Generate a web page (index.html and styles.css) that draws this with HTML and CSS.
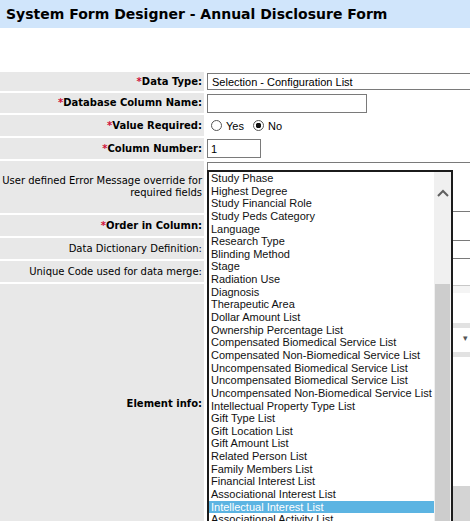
FILE: index.html
```html
<!DOCTYPE html>
<html lang="en">
<head>
    <meta charset="UTF-8">
    <meta name="viewport" content="width=device-width, initial-scale=1.0">
    <title>System Form Designer</title>
    <link rel="stylesheet" href="styles.css">
</head>
<body>
    <div class="page-title">System Form Designer - Annual Disclosure Form</div>

    <div class="form-grid">
        <div class="label strong"><span class="req">*</span>Data Type:</div>
        <div class="value">
            <select class="field select-wide">
                <option>Selection - Configuration List</option>
            </select>
        </div>

        <div class="label strong"><span class="req">*</span>Database Column Name:</div>
        <div class="value"><input type="text" class="field input-name"></div>

        <div class="label strong"><span class="req">*</span>Value Required:</div>
        <div class="value radios">
            <label class="radio"><input type="radio" name="required"> Yes</label>
            <label class="radio"><input type="radio" name="required" checked> No</label>
        </div>

        <div class="label strong"><span class="req">*</span>Column Number:</div>
        <div class="value"><input type="text" class="field input-number" value="1"></div>

        <div class="label nowrap">User defined Error Message override for<br>required fields</div>
        <div class="value top"><textarea class="field error-text"></textarea></div>

        <div class="label strong"><span class="req">*</span>Order in Column:</div>
        <div class="value"></div>

        <div class="label">Data Dictionary Definition:</div>
        <div class="value top"><input type="text" class="field input-wide"></div>

        <div class="label">Unique Code used for data merge:</div>
        <div class="value"></div>

        <div class="label strong">Element info:</div>
        <div class="value top">
            <div class="editor">
                <div class="editor-top"></div>
                <div class="editor-bar"></div>
                <div class="editor-sep"></div>
                <div class="editor-bar small"><span class="caret">&#9662;</span></div>
                <div class="editor-sep"></div>
                <div class="editor-body"></div>
                <div class="editor-foot"></div>
            </div>
        </div>

        <!-- открытый список типов конфигурации -->
        <div class="listbox">
            <div class="options">
                <div class="opt">Study Phase</div>
                <div class="opt">Highest Degree</div>
                <div class="opt">Study Financial Role</div>
                <div class="opt">Study Peds Category</div>
                <div class="opt">Language</div>
                <div class="opt">Research Type</div>
                <div class="opt">Blinding Method</div>
                <div class="opt">Stage</div>
                <div class="opt">Radiation Use</div>
                <div class="opt">Diagnosis</div>
                <div class="opt">Therapeutic Area</div>
                <div class="opt">Dollar Amount List</div>
                <div class="opt">Ownership Percentage List</div>
                <div class="opt">Compensated Biomedical Service List</div>
                <div class="opt">Compensated Non-Biomedical Service List</div>
                <div class="opt">Uncompensated Biomedical Service List</div>
                <div class="opt">Uncompensated Biomedical Service List</div>
                <div class="opt">Uncompensated Non-Biomedical Service List</div>
                <div class="opt">Intellectual Property Type List</div>
                <div class="opt">Gift Type List</div>
                <div class="opt">Gift Location List</div>
                <div class="opt">Gift Amount List</div>
                <div class="opt">Related Person List</div>
                <div class="opt">Family Members List</div>
                <div class="opt">Financial Interest List</div>
                <div class="opt">Associational Interest List</div>
                <div class="opt selected">Intellectual Interest List</div>
                <div class="opt">Associational Activity List</div>
            </div>
            <div class="scrollbar">
                <svg class="arrow-up" width="12" height="8" viewBox="0 0 12 8">
                    <polyline points="1,7 6,2 11,7" fill="none" stroke="#606060" stroke-width="2"/>
                </svg>
                <div class="thumb"></div>
            </div>
        </div>
    </div>
</body>
</html>
```

FILE: styles.css
```css
html, body {
    overflow: hidden;
}
body {
    margin: 0;
    font-family: "DejaVu Sans", Verdana, sans-serif;
    font-size: 10px;
    color: #000;
    background: #fff;
}
.page-title {
    height: 28px;
    line-height: 28px;
    padding-left: 6px;
    background: #d0e5fb;
    font-size: 14px;
    font-weight: bold;
    white-space: nowrap;
}
.form-grid {
    position: relative;
    display: grid;
    grid-template-columns: 204px 1fr;
    grid-template-rows: 19px 20px 21px 21px 52px 21px 21px 21px 240px;
    gap: 2px;
    margin-top: 44px;
}
.label {
    display: flex;
    align-items: center;
    justify-content: flex-end;
    padding: 0 2px 0 0;
    background: #e8e8e8;
    text-align: right;
    line-height: 12px;
}
.label.nowrap {
    white-space: nowrap;
}
.label.strong {
    font-weight: bold;
}
.req {
    color: #d0103a;
}
.value {
    display: flex;
    align-items: center;
    padding-left: 1px;
    min-width: 0;
    font-family: "Liberation Sans", Arial, sans-serif;
    font-size: 11px;
}
.value.top {
    align-items: flex-start;
}
.field {
    box-sizing: border-box;
    margin: 0;
    border: 1px solid #7a7a7a;
    border-radius: 0;
    background: #fff;
    font-family: "Liberation Sans", Arial, sans-serif;
    font-size: 11px;
    color: #000;
    flex-shrink: 0;
}
.select-wide {
    width: 320px;
    height: 17px;
    padding: 0 0 0 4px;
    appearance: none;
    -webkit-appearance: none;
}
.input-name {
    width: 160px;
    height: 19px;
    padding: 0 3px;
}
.input-number {
    width: 54px;
    height: 19px;
    padding: 0 3px;
}
.error-text {
    width: 320px;
    height: 50px;
    margin-top: 1px;
    resize: none;
}
.input-wide {
    width: 320px;
    height: 19px;
    margin-top: 2px;
}
.radios {
    gap: 9px;
}
.radio {
    display: flex;
    align-items: center;
    gap: 4px;
    margin-left: 4px;
}
.radio + .radio {
    margin-left: 0;
}
.radio input {
    appearance: none;
    -webkit-appearance: none;
    width: 11px;
    height: 11px;
    margin: 0;
    border: 1px solid #555;
    border-radius: 50%;
    background: #fff;
}
.radio input:checked {
    background: radial-gradient(circle, #111 0 2.6px, #fff 3px);
}
.editor {
    width: 320px;
    margin-top: 1px;
}
.editor-top {
    height: 7px;
    border-top: 1px solid #c8c8c8;
    background: #f4f4f4;
}
.editor-bar {
    height: 30px;
    background: #fff;
    position: relative;
}
.editor-bar.small {
    height: 24px;
}
.caret {
    position: absolute;
    left: 256px;
    top: 5px;
    font-size: 9px;
    color: #555;
}
.editor-sep {
    height: 5px;
    background: #e2e2e2;
}
.editor-body {
    height: 129px;
    background: #fff;
}
.editor-foot {
    height: 40px;
    background: #d4d4d4;
}
.listbox {
    position: absolute;
    left: 207px;
    top: 98px;
    z-index: 5;
    box-sizing: border-box;
    width: 246px;
    height: 420px;
    display: flex;
    border: 2px solid #1b1b1b;
    background: #fff;
    font-family: "Liberation Sans", Arial, sans-serif;
    font-size: 11px;
}
.options {
    flex: 1;
    min-width: 0;
}
.opt {
    height: 12.65px;
    line-height: 12.65px;
    padding-left: 2px;
    white-space: nowrap;
    color: #111;
}
.opt.selected {
    background: #5cb4e2;
    color: #fff;
}
.scrollbar {
    position: relative;
    width: 17px;
    background: #f0f0f0;
}
.arrow-up {
    position: absolute;
    left: 3px;
    top: 17px;
}
.thumb {
    position: absolute;
    left: 1px;
    right: 1px;
    top: 112px;
    bottom: 0;
    background: #cdcdcd;
}
```
